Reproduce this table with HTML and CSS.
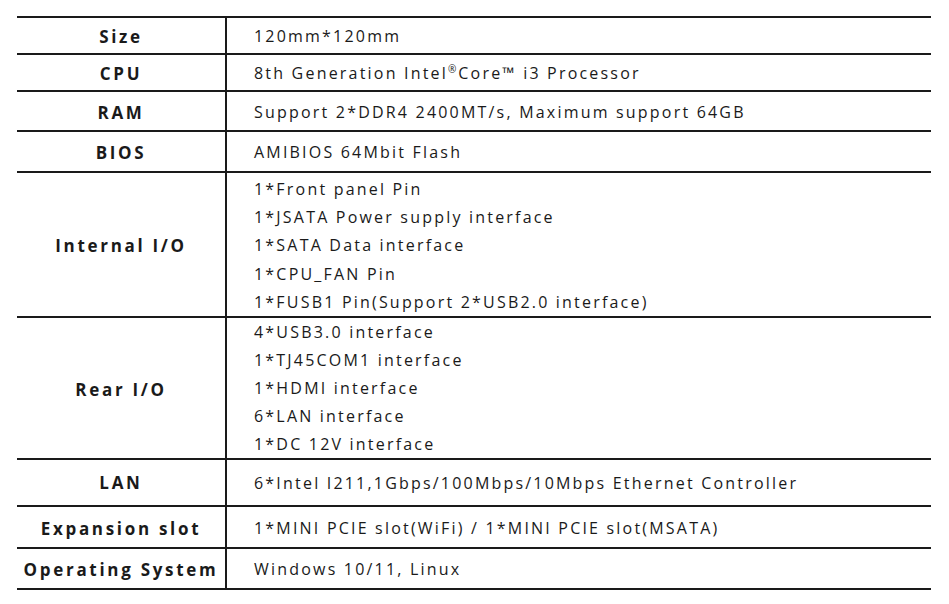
FILE: index.html
```html
<!DOCTYPE html>
<html>
<head>
<meta charset="utf-8">
<link rel="stylesheet" href="styles.css">
</head>
<body>
<table class="spec">
  <tr class="r-size"><th>Size</th><td>120mm*120mm</td></tr>
  <tr class="r-cpu"><th>CPU</th><td>8th Generation Intel<sup>®</sup>Core™ i3 Processor</td></tr>
  <tr class="r-ram"><th>RAM</th><td>Support 2*DDR4 2400MT/s, Maximum support 64GB</td></tr>
  <tr class="r-bios"><th>BIOS</th><td>AMIBIOS 64Mbit Flash</td></tr>
  <tr class="r-int"><th>Internal I/O</th><td class="multi">
    <div>1*Front panel Pin</div>
    <div>1*JSATA Power supply interface</div>
    <div>1*SATA Data interface</div>
    <div>1*CPU_FAN Pin</div>
    <div>1*FUSB1 Pin(Support 2*USB2.0 interface)</div>
  </td></tr>
  <tr class="r-rear"><th>Rear I/O</th><td class="multi">
    <div>4*USB3.0 interface</div>
    <div>1*TJ45COM1 interface</div>
    <div>1*HDMI interface</div>
    <div>6*LAN interface</div>
    <div>1*DC 12V interface</div>
  </td></tr>
  <tr class="r-lan"><th>LAN</th><td>6*Intel I211,1Gbps/100Mbps/10Mbps Ethernet Controller</td></tr>
  <tr class="r-exp"><th>Expansion slot</th><td>1*MINI PCIE slot(WiFi) / 1*MINI PCIE slot(MSATA)</td></tr>
  <tr class="r-os"><th>Operating System</th><td>Windows 10/11, Linux</td></tr>
</table>
</body>
</html>
```
FILE: styles.css
```css
html, body {
  margin: 0;
  padding: 0;
  background: #ffffff;
}
body {
  padding: 16px 0 0 17px;
  font-family: "Open Sans", "Noto Sans", sans-serif;
  color: #1a1a1a;
}
.spec {
  border-collapse: collapse;
  width: 914px;
  table-layout: fixed;
}
.spec tr {
  border-top: 2px solid #1a1a1a;
  border-bottom: 2px solid #1a1a1a;
}
.spec th {
  width: 208px;
  border-right: 2px solid #1a1a1a;
  font-weight: 700;
  font-size: 17px;
  letter-spacing: 2.7px;
  text-align: center;
  vertical-align: middle;
  padding: 2px 0 0 0;
}
.spec td {
  font-size: 16px;
  letter-spacing: 2.2px;
  text-align: left;
  vertical-align: middle;
  padding: 1px 0 0 27px;
}
.spec sup {
  font-size: 10px;
  vertical-align: 6px;
  line-height: 0;
  letter-spacing: 2px;
}
.multi div {
  line-height: 28.2px;
}
.spec .multi {
  padding-top: 0;
}
.spec .r-int .multi {
  padding-top: 2px;
}
.spec .r-rear .multi div {
  line-height: 28px;
}
.r-lan th, .r-lan td {
  padding-top: 0;
}
.r-size { height: 37px; }
.r-cpu { height: 37px; }
.r-ram { height: 40px; }
.r-bios { height: 41px; }
.r-int { height: 144px; }
.r-rear { height: 141px; }
.r-lan { height: 47px; }
.r-exp { height: 42px; }
.r-os { height: 41px; }
```
